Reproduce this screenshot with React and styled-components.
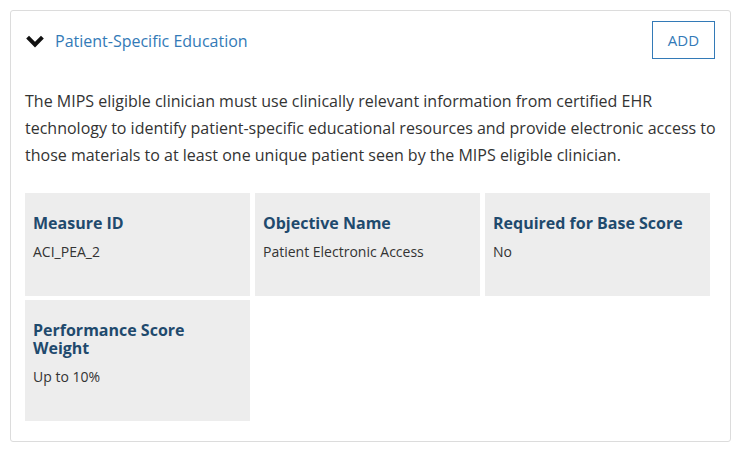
import React from "react";
import styled, { createGlobalStyle } from "styled-components";

const GlobalStyle = createGlobalStyle`
  body {
    margin: 0;
    background: #fff;
    font-family: "Open Sans", "Liberation Sans", sans-serif;
    color: #333;
  }
`;

const Page = styled.div`
  padding: 10px 11px 10px 10px;
`;

const Card = styled.section`
  border: 1px solid #dcdcdc;
  border-radius: 3px;
  padding: 10px 15px 20px 14px;
`;

const Header = styled.header`
  display: flex;
  align-items: center;
  justify-content: space-between;
`;

const Toggle = styled.button`
  display: flex;
  align-items: center;
  gap: 11px;
  background: none;
  border: 0;
  padding: 0 0 0 1px;
  margin-top: 2px;
  cursor: pointer;
  font-family: inherit;
  font-size: 16px;
  color: #337ab7;
`;

const AddButton = styled.button`
  width: 63px;
  height: 38px;
  border: 1px solid #337ab7;
  background: #fff;
  color: #337ab7;
  font-family: inherit;
  font-size: 15px;
  padding: 0;
  cursor: pointer;
`;

const Description = styled.p`
  margin: 29px -8px 0 0;
  font-size: 16px;
  line-height: 27px;
  color: #333;
`;

const Details = styled.div`
  display: grid;
  grid-template-columns: repeat(3, 225px);
  column-gap: 5px;
  row-gap: 4px;
  margin-top: 24px;
`;

const Cell = styled.div`
  background: #ededed;
  padding: 21px 8px 35px;
`;

const Label = styled.h4`
  margin: 0 0 11px;
  font-size: 16px;
  line-height: 18px;
  font-weight: 700;
  color: #1f4a6d;
`;

const Value = styled.div`
  font-size: 14px;
  line-height: 18px;
  color: #333;
`;

const Chevron = () => (
  <svg width="18" height="13" viewBox="0 0 18 13" aria-hidden="true">
    <polyline
      points="1.6,2.2 9,9.6 16.4,2.2"
      fill="none"
      stroke="#111"
      strokeWidth="4"
      strokeLinecap="butt"
      strokeLinejoin="miter"
    />
  </svg>
);

const details = [
  { label: "Measure ID", value: "ACI_PEA_2" },
  { label: "Objective Name", value: "Patient Electronic Access" },
  { label: "Required for Base Score", value: "No" },
  { label: "Performance Score Weight", value: "Up to 10%" },
];

export default function App() {
  return (
    <Page>
      <GlobalStyle />
      <Card>
        <Header>
          <Toggle>
            <Chevron />
            Patient-Specific Education
          </Toggle>
          <AddButton>ADD</AddButton>
        </Header>
        <Description>
          The MIPS eligible clinician must use clinically relevant information
          from certified EHR technology to identify patient-specific educational
          resources and provide electronic access to those materials to at least
          one unique patient seen by the MIPS eligible clinician.
        </Description>
        <Details>
          {details.map((d) => (
            <Cell key={d.label}>
              <Label>{d.label}</Label>
              <Value>{d.value}</Value>
            </Cell>
          ))}
        </Details>
      </Card>
    </Page>
  );
}
